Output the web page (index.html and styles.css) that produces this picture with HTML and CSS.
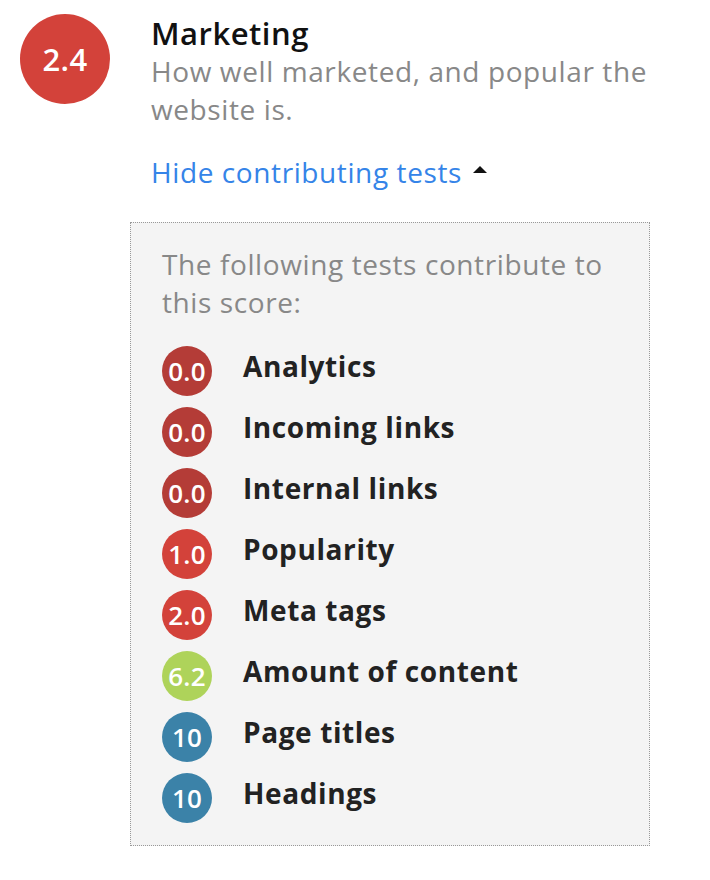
FILE: index.html
```html
<!DOCTYPE html>
<html>
<head>
<meta charset="utf-8">
<link rel="stylesheet" href="styles.css">
</head>
<body>
<div class="page">
  <div class="category">
    <div class="score-big red">2.4</div>
    <div class="cat-body">
      <div class="cat-title">Marketing</div>
      <div class="cat-desc">How well marketed, and popular the website is.</div>
      <a class="toggle" href="#"><span>Hide contributing tests</span><span class="caret"></span></a>
    </div>
  </div>
  <div class="tests">
    <div class="tests-intro">The following tests contribute to this score:</div>
    <ul class="test-list">
      <li class="test"><span class="score dark-red">0.0</span><span class="test-name">Analytics</span></li>
      <li class="test"><span class="score dark-red">0.0</span><span class="test-name">Incoming links</span></li>
      <li class="test"><span class="score dark-red">0.0</span><span class="test-name">Internal links</span></li>
      <li class="test"><span class="score red">1.0</span><span class="test-name">Popularity</span></li>
      <li class="test"><span class="score red">2.0</span><span class="test-name">Meta tags</span></li>
      <li class="test"><span class="score green">6.2</span><span class="test-name">Amount of content</span></li>
      <li class="test"><span class="score blue">10</span><span class="test-name">Page titles</span></li>
      <li class="test"><span class="score blue">10</span><span class="test-name">Headings</span></li>
    </ul>
  </div>
</div>
</body>
</html>
```
FILE: styles.css
```css
html, body {
  margin: 0;
  padding: 0;
  background: #fff;
  font-family: "Open Sans", "Noto Sans", sans-serif;
}
.page {
  padding: 14px 0 0 20px;
}
.category {
  display: flex;
  align-items: flex-start;
  gap: 41px;
}
.score-big {
  width: 90px;
  height: 90px;
  border-radius: 50%;
  display: flex;
  align-items: center;
  justify-content: center;
  color: #fff;
  font-size: 31px;
  font-weight: 600;
  letter-spacing: 0.3px;
  flex-shrink: 0;
}
.cat-body {
  width: 520px;
}
.cat-title {
  font-size: 31px;
  font-weight: 600;
  color: #111;
  line-height: 38px;
  letter-spacing: 0.5px;
}
.cat-desc {
  font-size: 28px;
  color: #888;
  line-height: 38px;
  letter-spacing: 0.6px;
}
.toggle {
  display: inline-flex;
  align-items: center;
  margin-top: 24px;
  font-size: 28px;
  letter-spacing: 0.6px;
  color: #3584e8;
  text-decoration: none;
  line-height: 40px;
}
.caret {
  display: inline-block;
  width: 0;
  height: 0;
  margin-left: 11px;
  margin-top: -5px;
  border-left: 7px solid transparent;
  border-right: 7px solid transparent;
  border-bottom: 7px solid #111;
}
.tests {
  box-sizing: border-box;
  margin: 30px 0 0 110px;
  width: 520px;
  border: 1px dotted #999;
  background: #f4f4f4;
  padding: 22px 17px 22px 31px;
}
.tests-intro {
  font-size: 28px;
  color: #888;
  line-height: 38px;
  letter-spacing: 0.6px;
  margin-bottom: 25px;
}
.test-list {
  list-style: none;
  margin: 0;
  padding: 0;
  display: flex;
  flex-direction: column;
  gap: 11px;
}
.test {
  display: flex;
  align-items: center;
  gap: 31px;
  height: 50px;
}
.score {
  width: 50px;
  height: 50px;
  border-radius: 50%;
  display: flex;
  align-items: center;
  justify-content: center;
  color: #fff;
  font-size: 26px;
  font-weight: 600;
  letter-spacing: 0.2px;
  flex-shrink: 0;
}
.test-name {
  font-size: 28px;
  font-weight: 700;
  color: #222;
  letter-spacing: 0.6px;
  margin-top: -10px;
}
.red { background: #d3423a; }
.dark-red { background: #b43c37; }
.green { background: #aed35a; }
.blue { background: #3b82a8; }
```
